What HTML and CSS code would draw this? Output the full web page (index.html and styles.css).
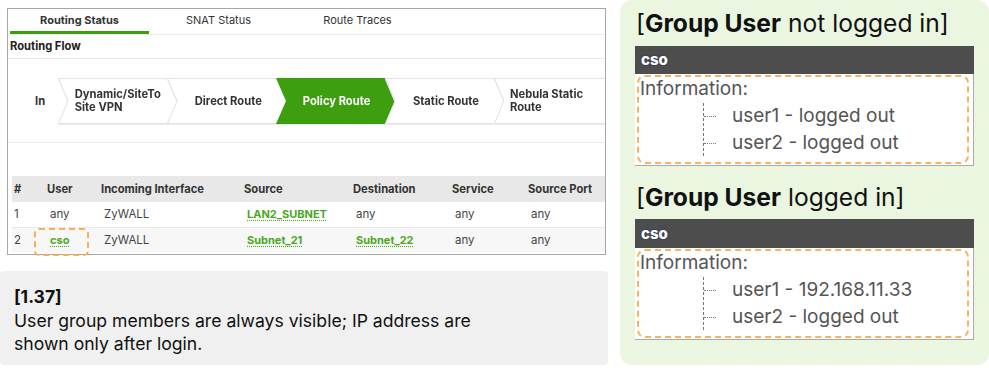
FILE: index.html
```html
<!DOCTYPE html>
<html>
<head>
<meta charset="utf-8">
<link rel="stylesheet" href="styles.css">
</head>
<body>
<div class="page">
  <div class="left">
    <div class="panel">
      <div class="tabs">
        <div class="tab active">Routing Status</div>
        <div class="tab">SNAT Status</div>
        <div class="tab">Route Traces</div>
      </div>
      <div class="section-title">Routing Flow</div>
      <div class="flow">
        <div class="flow-in">In</div>
        <div class="chev first">
          <svg class="chev-bg" width="122" height="46" viewBox="0 0 122 46"><polygon points="0.5,0.5 109,0.5 121.5,23 109,45.5 0.5,45.5 10,23" fill="#fff" stroke="#e2e2e2"/></svg>
          <span class="chev-label">Dynamic/SiteTo<br>Site VPN</span>
        </div>
        <div class="chev">
          <svg class="chev-bg" width="122" height="46" viewBox="0 0 122 46"><polygon points="0.5,0.5 109,0.5 121.5,23 109,45.5 0.5,45.5 10,23" fill="#fff" stroke="#e2e2e2"/></svg>
          <span class="chev-label">Direct Route</span>
        </div>
        <div class="chev on">
          <svg class="chev-bg" width="122" height="46" viewBox="0 0 122 46"><polygon points="0,0 109,0 122,23 109,46 0,46 10,23" fill="#3d9e0f"/></svg>
          <span class="chev-label">Policy Route</span>
        </div>
        <div class="chev">
          <svg class="chev-bg" width="122" height="46" viewBox="0 0 122 46"><polygon points="0.5,0.5 109,0.5 121.5,23 109,45.5 0.5,45.5 10,23" fill="#fff" stroke="#e2e2e2"/></svg>
          <span class="chev-label">Static Route</span>
        </div>
        <div class="chev last">
          <svg class="chev-bg" width="122" height="46" viewBox="0 0 122 46"><polygon points="0.5,0.5 122,0.5 122,45.5 0.5,45.5 10,23" fill="#fff" stroke="#e2e2e2"/></svg>
          <span class="chev-label">Nebula Static<br>Route</span>
        </div>
      </div>
      <div class="spacer"></div>
      <table class="grid">
        <thead>
          <tr>
            <th class="c-num">#</th>
            <th class="c-user">User</th>
            <th class="c-if">Incoming Interface</th>
            <th class="c-src">Source</th>
            <th class="c-dst">Destination</th>
            <th class="c-svc">Service</th>
            <th class="c-port">Source Port</th>
          </tr>
        </thead>
        <tbody>
          <tr>
            <td>1</td>
            <td class="pad">any</td>
            <td class="pad">ZyWALL</td>
            <td class="pad"><span class="link">LAN2_SUBNET</span></td>
            <td class="pad">any</td>
            <td class="pad">any</td>
            <td class="pad">any</td>
          </tr>
          <tr class="alt">
            <td>2</td>
            <td class="pad mark-cell"><span class="link">cso</span><span class="mark"></span></td>
            <td class="pad">ZyWALL</td>
            <td class="pad"><span class="link">Subnet_21</span></td>
            <td class="pad"><span class="link">Subnet_22</span></td>
            <td class="pad">any</td>
            <td class="pad">any</td>
          </tr>
        </tbody>
      </table>
    </div>
    <div class="note">
      <div class="note-title">[1.37]</div>
      <div class="note-text">User group members are always visible; IP address are shown only after login.</div>
    </div>
  </div>

  <div class="right">
    <div class="case">
      <div class="case-title">[<b>Group User</b> not logged in]</div>
      <div class="card">
        <div class="card-head">cso</div>
        <div class="card-body">
          <div class="info">Information:</div>
          <ul class="tree">
            <li>user1 - logged out</li>
            <li>user2 - logged out</li>
          </ul>
        </div>
      </div>
    </div>
    <div class="case second">
      <div class="case-title">[<b>Group User</b> logged in]</div>
      <div class="card">
        <div class="card-head">cso</div>
        <div class="card-body">
          <div class="info">Information:</div>
          <ul class="tree">
            <li>user1 - 192.168.11.33</li>
            <li>user2 - logged out</li>
          </ul>
        </div>
      </div>
    </div>
  </div>
</div>
</body>
</html>
```

FILE: styles.css
```css
* { box-sizing: border-box; }
html, body { margin: 0; padding: 0; background: #fff; }
body {
  width: 989px;
  height: 370px;
  overflow: hidden;
  font-family: Inter, "Noto Sans", sans-serif;
  color: #222;
}
.page {
  display: grid;
  grid-template-columns: 608px 369px;
  column-gap: 12px;
}
.left { padding-top: 8px; }

.panel {
  margin-left: 7px;
  width: 599px;
  border: 1px solid #a6a6a6;
  padding-bottom: 2px;
}
.tabs {
  display: flex;
  height: 26px;
  padding-left: 2px;
  border-bottom: 1px solid #ececec;
}
.tab {
  width: 139px;
  text-align: center;
  font-size: 11px;
  line-height: 22px;
  color: #333;
}
.tab.active {
  font-weight: 700;
  border-bottom: 3px solid #3d9e0f;
}
.section-title {
  height: 24px;
  padding-left: 2px;
  font-size: 11.2px;
  font-weight: 700;
  line-height: 22px;
  color: #222;
  border-bottom: 1px solid #e8e8e8;
}
.flow {
  display: flex;
  align-items: stretch;
  height: 84px;
  padding: 19px 0 18px 2px;
  border-bottom: 1px solid #ececec;
  overflow: hidden;
}
.flow-in {
  width: 48px;
  font-size: 11.2px;
  font-weight: 700;
  color: #333;
  display: flex;
  align-items: center;
  padding-left: 25px;
}
.chev {
  position: relative;
  width: 122px;
  height: 46px;
  margin-right: -12px;
  display: flex;
  align-items: center;
  padding-left: 28px;
  filter: drop-shadow(0 1px 0 #ececec);
}
.chev.first { padding-left: 17px; }
.chev.on { padding-left: 27px; }
.chev.last { width: 112px; margin-right: 0; padding-left: 16px; }
.chev-bg { position: absolute; left: 0; top: 0; }
.chev-label {
  position: relative;
  font-size: 11.2px;
  font-weight: 700;
  line-height: 13px;
  color: #333;
}
.chev.on .chev-label { color: #fff; }

.spacer { height: 33px; }

.grid {
  margin-left: 4px;
  width: 593px;
  border-collapse: collapse;
  font-size: 11.5px;
  color: #444;
}
.grid th {
  background: #e8e8e8;
  height: 26px;
  text-align: left;
  font-size: 11.2px;
  font-weight: 700;
  color: #333;
  padding: 0 0 0 2px;
}
.grid td {
  height: 25px;
  padding: 0 0 0 2px;
  border-bottom: 1px solid #e9e9e9;
}
.grid tr.alt td { background: #f7f7f7; border-bottom: none; }
.grid td.pad { padding-left: 5px; }
.c-num { width: 33px; }
.c-user { width: 54px; }
.c-if { width: 143px; }
.c-src { width: 109px; }
.c-dst { width: 99px; }
.c-svc { width: 76px; }
.link {
  color: #4aa81d;
  font-weight: 700;
  font-size: 11px;
  text-decoration: underline dotted #4aa81d;
  text-underline-offset: 2px;
}
.mark-cell { position: relative; }
.mark {
  position: absolute;
  left: -11px;
  top: 0;
  width: 55px;
  height: 28px;
  border: 2px dashed #f7ad5a;
  border-radius: 5px;
}

.note {
  margin-top: 16px;
  height: 94px;
  background: #f0f0f0;
  border-radius: 4px;
  padding: 14px 14px 0 14px;
  color: #111;
}
.note-title {
  font-size: 17.5px;
  font-weight: 700;
  line-height: 24px;
}
.note-text {
  font-size: 17.6px;
  line-height: 23px;
  width: 480px;
}

.right {
  height: 365px;
  background: #eaf6df;
  border-radius: 12px;
  padding: 8px 15px 0 15px;
}
.case-title {
  font-size: 24.6px;
  line-height: 30px;
  color: #111;
  padding-left: 1px;
  white-space: nowrap;
}
.case-title b { font-weight: 700; }
.card {
  margin-top: 8px;
  width: 339px;
}
.card-head {
  height: 28px;
  background: #4d4d4d;
  color: #fff;
  font-size: 15px;
  font-weight: 800;
  line-height: 28px;
  padding-left: 6px;
  text-shadow: 0 0 2px #1a2a5a;
}
.card-body {
  position: relative;
  height: 92px;
  background: #fff;
  border-right: 1px solid #aaa;
  border-bottom: 1px solid #aaa;
  padding: 2px 0 0 5px;
}
.card-body::after {
  content: "";
  position: absolute;
  left: 2px;
  top: 1px;
  right: 4px;
  bottom: 1px;
  border: 2.5px dashed #f9b25f;
  border-radius: 8px;
}
.info {
  font-size: 19px;
  line-height: 26px;
  color: #555;
}
.tree {
  list-style: none;
  margin: 1px 0 0 63px;
  padding: 0 0 0 28px;
  border-left: 1px dashed #777;
  width: 220px;
}
.tree li {
  position: relative;
  font-size: 19px;
  line-height: 26.5px;
  color: #555;
}
.tree li::before {
  content: "";
  position: absolute;
  left: -28px;
  top: 13px;
  width: 12px;
  border-top: 1px dotted #777;
}
.second { margin-top: 16px; }
.second .card { margin-top: 7px; }
.second .card-head { height: 29px; line-height: 29px; }
```
